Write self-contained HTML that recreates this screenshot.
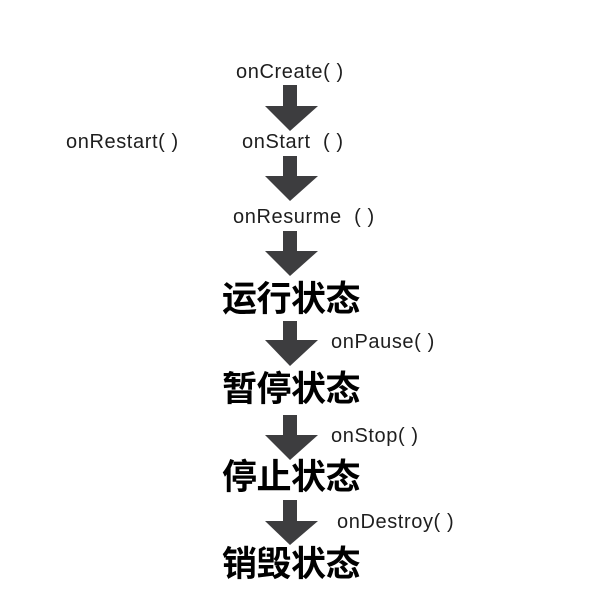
<!DOCTYPE html>
<html><head><meta charset="utf-8"><style>
html,body{margin:0;padding:0;background:#fff;width:600px;height:600px;overflow:hidden}
.t{position:absolute;font-family:"Liberation Sans","Noto Sans CJK SC",sans-serif;font-size:20px;line-height:20px;letter-spacing:0.6px;color:#1e1e1e;white-space:nowrap}
.c{position:absolute;font-family:"Liberation Sans","Noto Sans CJK SC",sans-serif;font-weight:bold;font-size:35px;line-height:35px;color:#000;white-space:nowrap;letter-spacing:-0.5px}
svg{position:absolute;left:0;top:0}
</style></head><body>
<svg width="600" height="600">
<g fill="#3d3d3f">
<path d="M283 85H297V106H318L290 131L265 106H283Z"/>
<path d="M283 156H297V176H318L290 201L265 176H283Z"/>
<path d="M283 231H297V251H318L290 276L265 251H283Z"/>
<path d="M283 321H297V340H318L290 366L265 340H283Z"/>
<path d="M283 415H297V435H318L290 460L265 435H283Z"/>
<path d="M283 500H297V521H318L290 545L265 521H283Z"/>
</g>
</svg>
<div class="t" style="left:236px;top:62px">onCreate( )</div>
<div class="t" style="left:66px;top:132px">onRestart( )</div>
<div class="t" style="left:242px;top:132px">onStart&nbsp; ( )</div>
<div class="t" style="left:233px;top:207px">onResurme&nbsp; ( )</div>
<div class="c" style="left:222px;top:282px">运行状态</div>
<div class="t" style="left:331px;top:332px">onPause( )</div>
<div class="c" style="left:222px;top:372px">暂停状态</div>
<div class="t" style="left:331px;top:426px">onStop( )</div>
<div class="c" style="left:222px;top:460px">停止状态</div>
<div class="t" style="left:337px;top:512px">onDestroy( )</div>
<div class="c" style="left:222px;top:547px">销毁状态</div>
</body></html>
